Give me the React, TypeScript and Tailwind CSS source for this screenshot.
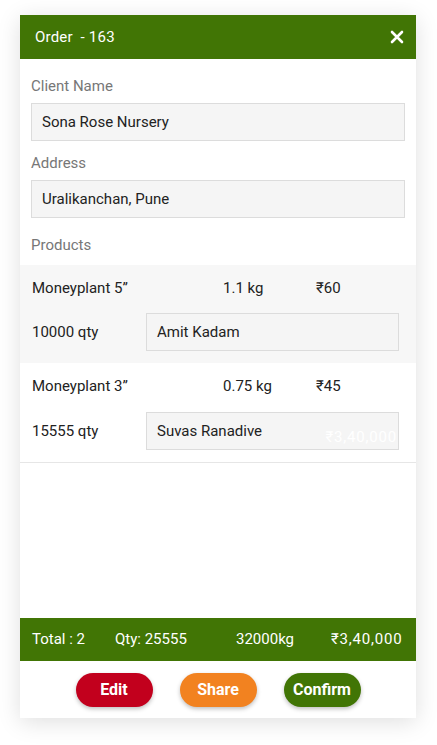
import React from "react";

const font = { fontFamily: "Roboto, 'Open Sans', sans-serif" };

function Field({ value }: { value: string }) {
  return (
    <div className="h-[38px] bg-[#f5f5f5] border border-[#dcdcdc] flex items-center px-[10px] text-[15px] text-[#222]">
      {value}
    </div>
  );
}

function ProductRow({
  name,
  weight,
  price,
  qty,
  person,
  shaded,
  ghost,
}: {
  name: string;
  weight: string;
  price: string;
  qty: string;
  person: string;
  shaded?: boolean;
  ghost?: boolean;
}) {
  return (
    <div
      className={
        (shaded ? "bg-[#f7f7f7]" : "bg-white border-b border-[#e6e6e6]") +
        " pl-[12px] pr-[17px] pt-[13px] pb-[12px]"
      }
    >
      <div className="flex items-center h-[20px] text-[15px] text-[#222]">
        <div className="w-[191px]">{name}</div>
        <div className="w-[93px]">{weight}</div>
        <div>{price}</div>
      </div>
      <div className={"flex items-center " + (shaded ? "mt-[15px]" : "mt-[16px]")}>
        <div className="w-[114px] text-[15px] text-[#222]">{qty}</div>
        <div className="relative flex-1 h-[38px] bg-[#f5f5f5] border border-[#dcdcdc] flex items-center px-[10px] text-[15px] text-[#222]">
          {person}
          {ghost && (
            <span className="absolute right-[1px] top-[14px] text-[15px] leading-[20px] tracking-[0.8px] text-white">
              ₹3,40,000
            </span>
          )}
        </div>
      </div>
    </div>
  );
}

export default function App() {
  return (
    <div className="w-[437px] h-[745px] bg-white pt-[15px]" style={font}>
      <div className="ml-[20px] w-[396px] h-[703px] bg-white flex flex-col shadow-[0_4px_22px_rgba(0,0,0,0.13)]">
        <div className="h-[44px] bg-[#417505] flex items-center justify-between pl-[15px] pr-[12px] text-white">
          <span className="text-[15px] tracking-[0.2px]">Order&nbsp; - 163</span>
          <svg width="14" height="14" viewBox="0 0 14 14" fill="none">
            <path d="M2 2L12 12M12 2L2 12" stroke="white" strokeWidth="2.6" strokeLinecap="round" />
          </svg>
        </div>
        <div className="px-[11px] pt-[16px]">
          <div className="h-[20px] leading-[20px] text-[15px] text-[#777] mt-[1px] mb-[7px]">Client Name</div>
          <Field value="Sona Rose Nursery" />
          <div className="h-[20px] leading-[20px] text-[15px] text-[#777] mt-[12px] mb-[7px]">Address</div>
          <Field value="Uralikanchan, Pune" />
          <div className="h-[20px] leading-[20px] text-[15px] text-[#777] mt-[17px] mb-[10px]">Products</div>
        </div>
        <ProductRow
          name="Moneyplant 5”"
          weight="1.1 kg"
          price="₹60"
          qty="10000 qty"
          person="Amit Kadam"
          shaded
        />
        <ProductRow
          name="Moneyplant 3”"
          weight="0.75 kg"
          price="₹45"
          qty="15555 qty"
          person="Suvas Ranadive"
          ghost
        />
        <div className="flex-1" />
        <div className="h-[43px] bg-[#417505] flex items-center px-[12px] text-white text-[15px]">
          <div className="w-[83px]">Total : 2</div>
          <div className="w-[121px]">Qty: 25555</div>
          <div className="w-[95px]">32000kg</div>
          <div className="tracking-[0.8px]">₹3,40,000</div>
        </div>
        <div className="flex justify-center gap-[27px] pt-[12px] pb-[11px]">
          <button className="w-[77px] h-[34px] rounded-full bg-[#c2001d] text-white font-bold text-[16px] shadow-[0_2px_4px_rgba(0,0,0,0.25)]">
            Edit
          </button>
          <button className="w-[77px] h-[34px] rounded-full bg-[#f28220] text-white font-bold text-[16px] shadow-[0_2px_4px_rgba(0,0,0,0.25)]">
            Share
          </button>
          <button className="w-[77px] h-[34px] rounded-full bg-[#417505] text-white font-bold text-[16px] shadow-[0_2px_4px_rgba(0,0,0,0.25)]">
            Confirm
          </button>
        </div>
      </div>
    </div>
  );
}
